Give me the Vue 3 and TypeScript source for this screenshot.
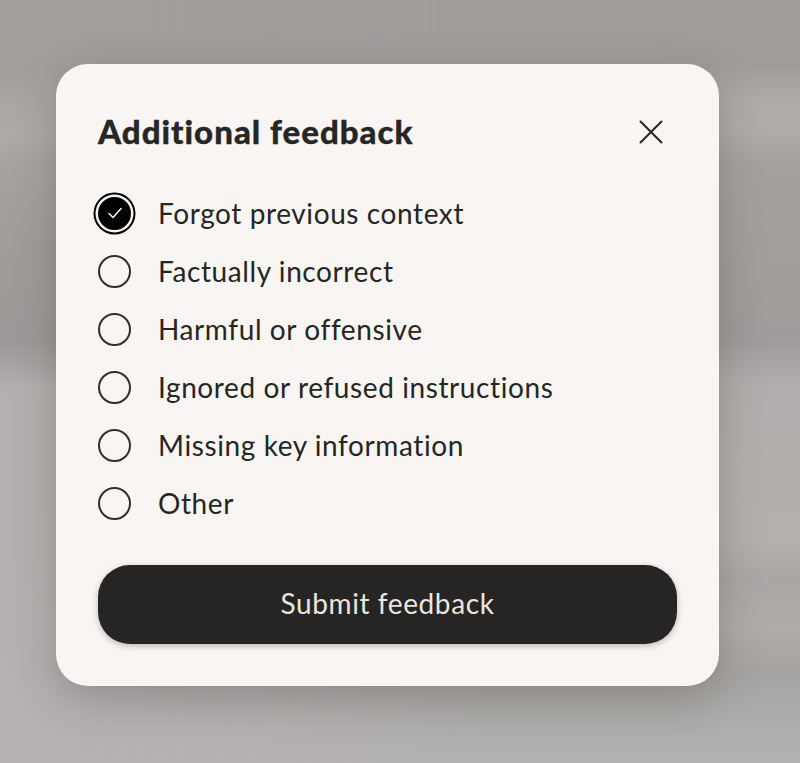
<script setup lang="ts">
import { ref } from 'vue'

const options: string[] = [
  'Forgot previous context',
  'Factually incorrect',
  'Harmful or offensive',
  'Ignored or refused instructions',
  'Missing key information',
  'Other',
]
const selected = ref<string[]>(['Forgot previous context'])
function toggle(o: string): void {
  selected.value = selected.value.includes(o)
    ? selected.value.filter((s) => s !== o)
    : [...selected.value, o]
}
</script>

<template>
  <div class="page">
    <section class="card">
      <header class="head">
        <h2 class="title">Additional feedback</h2>
        <button class="close" aria-label="Close">
          <svg width="24" height="24" viewBox="0 0 24 24" fill="none" stroke="#262624" stroke-width="2" stroke-linecap="round">
            <path d="M1.5 1.5 22.5 22.5M22.5 1.5 1.5 22.5" />
          </svg>
        </button>
      </header>
      <ul class="list">
        <li v-for="o in options" :key="o" class="row" @click="toggle(o)">
          <span class="box" :class="{ on: selected.includes(o) }">
            <svg v-if="selected.includes(o)" width="16" height="14" viewBox="0 0 16 14" fill="none" stroke="#fff" stroke-width="1.4" stroke-linecap="round" stroke-linejoin="round">
              <path d="M2 7.5 6 11.5 14 2.5" />
            </svg>
          </span>
          <span class="label">{{ o }}</span>
        </li>
      </ul>
      <button class="submit">Submit feedback</button>
    </section>
  </div>
</template>

<style>
html, body { margin: 0; padding: 0; }
</style>

<style scoped>
.page {
  position: relative;
  box-sizing: border-box;
  width: 800px;
  height: 763px;
  padding: 64px 81px 77px 56px;
  overflow: hidden;
  background: linear-gradient(180deg,
    #a29e9c 0px, #a29e9c 70px, #a9a5a3 100px, #aeaaa8 135px, #a6a2a0 165px,
    #a09c9a 240px, #9c9897 340px, #a7a3a2 365px, #b4afae 388px, #b6b1b1 763px);
}
.page::before {
  content: "";
  position: absolute;
  inset: 0;
  background: linear-gradient(180deg,
    #a09c9a 0px, #a09c9a 65px, #adaaa7 100px, #b0acaa 130px, #a4a09e 165px,
    #a29e9c 240px, #9f9b9a 340px, #a8a4a3 362px, #b2adac 385px, #b4afad 540px,
    #a9a7a5 580px, #afaba9 630px, #a5a3a1 670px, #adacaa 720px, #b2b1b0 763px);
  -webkit-mask-image: linear-gradient(90deg, transparent 10%, #000 60%);
  mask-image: linear-gradient(90deg, transparent 10%, #000 60%);
}
.card {
  position: relative;
  box-sizing: border-box;
  width: 663px;
  height: 622px;
  padding: 42px 42px 41px 42px;
  background: #f8f5f2;
  border-radius: 32px;
  box-shadow: 0 12px 40px rgba(60, 55, 50, 0.28);
  display: flex;
  flex-direction: column;
  font-family: Lato, "Noto Sans", sans-serif;
  color: #262624;
}
.head {
  display: flex;
  align-items: center;
  justify-content: space-between;
  height: 52px;
  margin-bottom: 38px;
}
.title {
  margin: 0;
  font-size: 33px;
  font-weight: 900;
  letter-spacing: 1px;
  -webkit-text-stroke: 0.35px #262624;
  line-height: 50px;
  padding-bottom: 2px;
}
.close {
  width: 26px;
  height: 26px;
  margin-right: 13px;
  padding: 0;
  border: 0;
  background: none;
  display: flex;
  align-items: center;
  justify-content: center;
}
.list {
  list-style: none;
  margin: 0;
  padding: 0;
  display: flex;
  flex-direction: column;
  gap: 24px;
}
.row {
  display: flex;
  align-items: center;
  gap: 27px;
  height: 34px;
}
.box {
  box-sizing: border-box;
  flex: none;
  width: 33px;
  height: 33px;
  border: 2px solid #302f2d;
  border-radius: 50%;
  display: flex;
  align-items: center;
  justify-content: center;
}
.box.on {
  background: #000;
  border-color: #000;
  box-shadow: 0 0 0 2.5px #f8f5f2, 0 0 0 4.5px #000;
}
.label {
  font-size: 28px;
  letter-spacing: 0.6px;
  line-height: 34px;
}
.submit {
  margin-top: 45px;
  height: 79px;
  border: 0;
  border-radius: 32px;
  background: #262523;
  color: #e9e6e1;
  font-family: inherit;
  font-size: 28px;
  letter-spacing: 0.6px;
  padding: 0 0 3px;
  box-shadow: 0 2px 6px rgba(0, 0, 0, 0.25);
}
</style>
